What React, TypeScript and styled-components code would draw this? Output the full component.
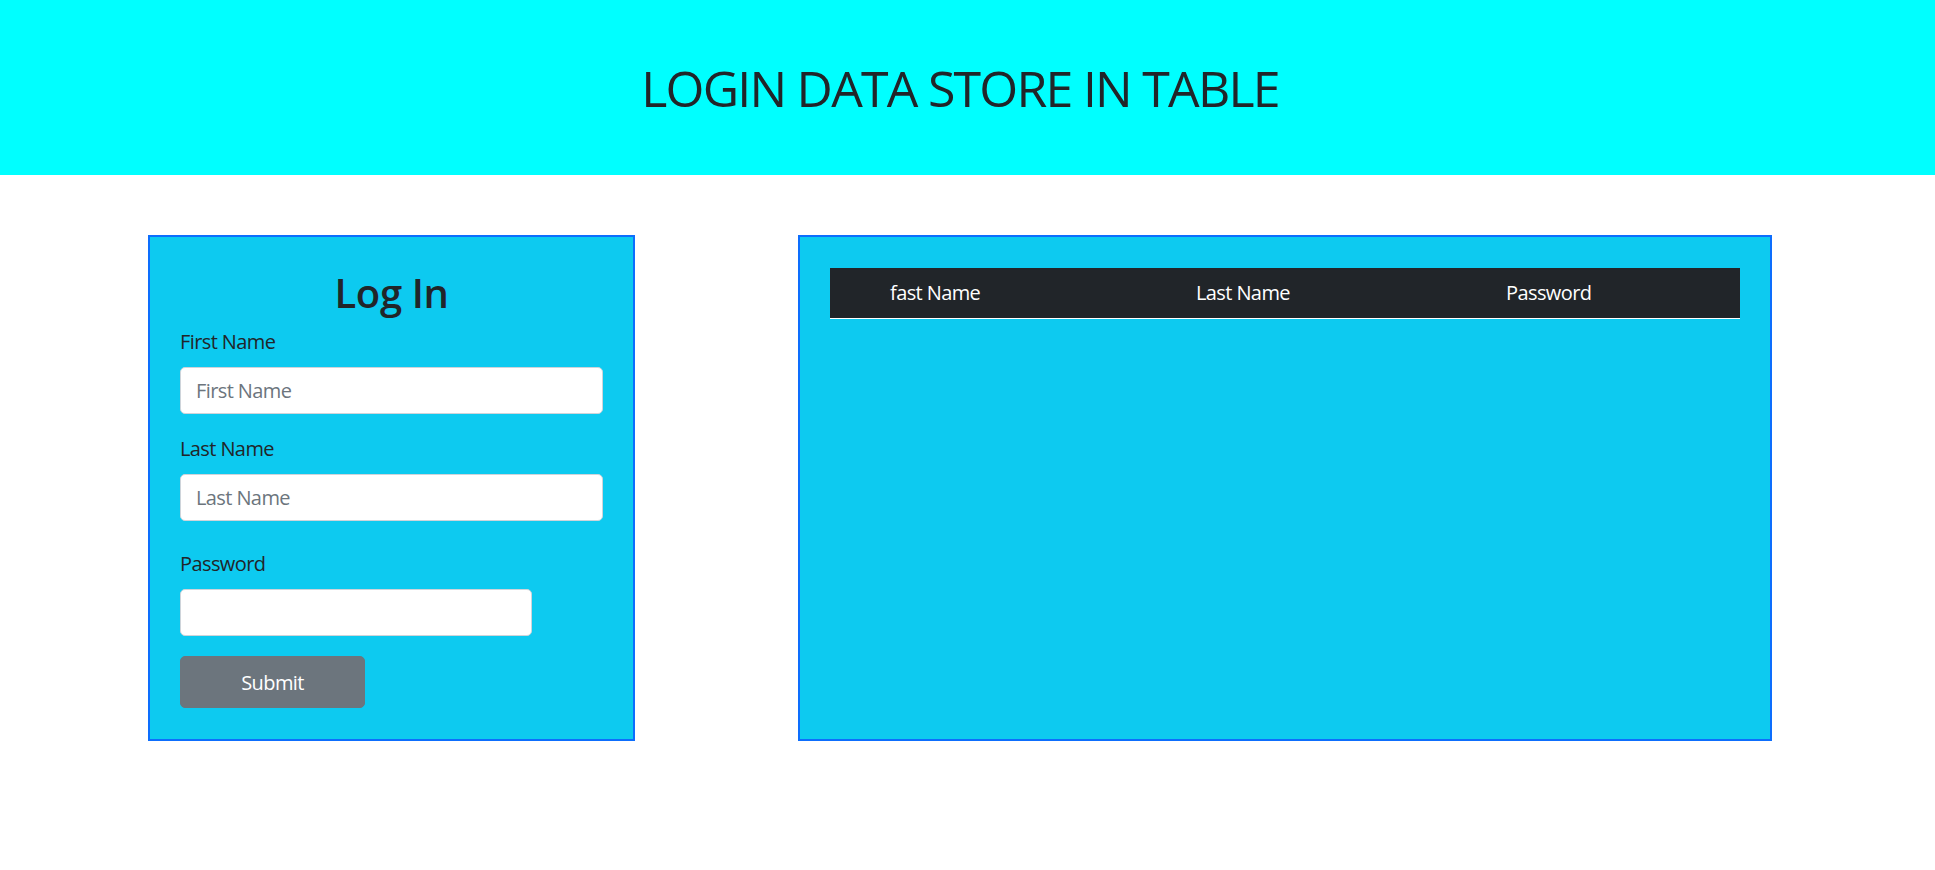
import React from "react";
import styled, { createGlobalStyle } from "styled-components";

const Global = createGlobalStyle`
  * { box-sizing: border-box; }
  html, body { margin: 0; padding: 0; background: #fff; }
  body {
    font-family: "Open Sans", "Noto Sans", "Liberation Sans", sans-serif;
    color: #212529;
    font-size: 20px;
    line-height: 1.5;
  }
`;

const Header = styled.header`
  background: #00ffff;
  height: 175px;
  display: flex;
  align-items: center;
  justify-content: center;
`;

const Title = styled.h1`
  margin: 0 15px 0 0;
  font-size: 50px;
  font-weight: 400;
  line-height: 1.2;
  color: #212529;
  letter-spacing: -1.75px;
`;

const Main = styled.main`
  display: flex;
  align-items: stretch;
  gap: 163px;
  padding: 60px 0 0 148px;
`;

const Card = styled.section<{ $width: number; $padTop: number }>`
  width: ${(p) => p.$width}px;
  background: #0dcaf0;
  border: 2px solid #0d6efd;
  padding: ${(p) => p.$padTop}px 30px 31px;
`;

const CardTitle = styled.h2`
  margin: 0 0 10px;
  text-align: center;
  font-size: 40px;
  font-weight: 600;
  line-height: 1.2;
  letter-spacing: -0.4px;
`;

const Field = styled.div<{ $extraTop?: number }>`
  display: flex;
  flex-direction: column;
  align-items: flex-start;
  padding-top: ${(p) => p.$extraTop ?? 0}px;
  margin-bottom: 20px;
`;

const Label = styled.label`
  font-size: 20px;
  line-height: 30px;
  margin-bottom: 10px;
  letter-spacing: -0.6px;
`;

const Input = styled.input<{ $width?: number }>`
  width: ${(p) => (p.$width ? `${p.$width}px` : "100%")};
  height: 47px;
  padding: 7px 15px;
  font-family: inherit;
  font-size: 20px;
  letter-spacing: -0.6px;
  color: #212529;
  background: #fff;
  border: 1px solid #ced4da;
  border-radius: 5px;
  outline: none;
  &::placeholder { color: #6c757d; }
`;

const Button = styled.button`
  width: 185px;
  height: 52px;
  background: #6c757d;
  color: #fff;
  border: 1px solid #6c757d;
  border-radius: 5px;
  font-family: inherit;
  font-size: 20px;
  letter-spacing: -0.6px;
  cursor: pointer;
`;

const Table = styled.div`
  display: grid;
  grid-template-columns: 50px 306px 310px 1fr;
  background: #212529;
  border-bottom: 1px solid #ffffff;
`;

const Th = styled.div`
  padding: 10px;
  color: #fff;
  font-size: 20px;
  line-height: 30px;
  letter-spacing: -0.6px;
  white-space: nowrap;
`;

export default function App() {
  return (
    <>
      <Global />
      <Header>
        <Title>LOGIN DATA STORE IN TABLE</Title>
      </Header>
      <Main>
        <Card $width={487} $padTop={32}>
          <CardTitle>Log In</CardTitle>
          <Field>
            <Label htmlFor="fn">First Name</Label>
            <Input id="fn" placeholder="First Name" />
          </Field>
          <Field>
            <Label htmlFor="ln">Last Name</Label>
            <Input id="ln" placeholder="Last Name" />
          </Field>
          <Field $extraTop={8}>
            <Label htmlFor="pw">Password</Label>
            <Input id="pw" type="password" $width={352} />
          </Field>
          <Button type="button">Submit</Button>
        </Card>
        <Card $width={974} $padTop={31}>
          <Table>
            <Th />
            <Th>fast Name</Th>
            <Th>Last Name</Th>
            <Th>Password</Th>
          </Table>
        </Card>
      </Main>
    </>
  );
}
